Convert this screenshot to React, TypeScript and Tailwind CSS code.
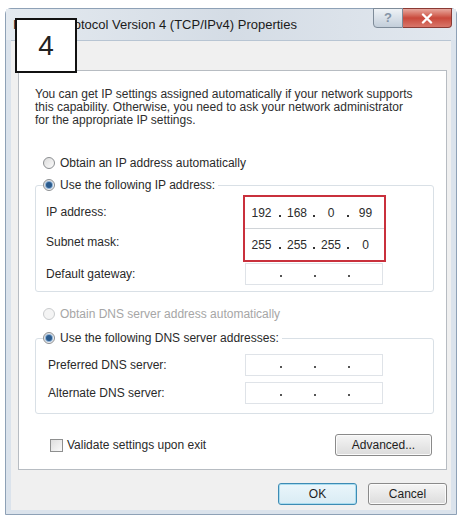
import React from 'react';

interface RadioProps {
  checked?: boolean;
  disabled?: boolean;
}

function Radio({ checked, disabled }: RadioProps) {
  if (disabled) {
    return (
      <span className="flex h-[12px] w-[12px] shrink-0 items-center justify-center rounded-full border border-[#c9cbcd] bg-[#f4f4f4]" />
    );
  }
  return (
    <span className="flex h-[12px] w-[12px] shrink-0 items-center justify-center rounded-full border border-[#8b8e91] bg-gradient-to-br from-[#dcdcdc] to-[#fbfbfb]">
      {checked && (
        <span className="h-[6px] w-[6px] rounded-full bg-[#2a5a8c] shadow-[0_0_0_1px_#8fb2d6]" />
      )}
    </span>
  );
}

interface IpFieldProps {
  octets?: string[];
  framed?: boolean;
}

// four octet cells with dots between, like the Win32 IP address control
function IpField({ octets = ['', '', '', ''], framed = true }: IpFieldProps) {
  const widths = ['w-[33px]', 'w-[30px]', 'w-[30px]', 'w-[31px]'];
  return (
    <div
      className={
        framed
          ? 'flex h-[22px] w-[138px] items-center border border-[#dfe3e8] bg-white'
          : 'flex h-[31px] w-full items-center bg-white'
      }
    >
      {octets.map((value, i) => (
        <React.Fragment key={i}>
          <span className={`${widths[i]} text-center text-[12px] text-[#2b2b2b]`}>{value}</span>
          {i < 3 && (
            <span className="flex w-[4px] justify-center">
              <span
                className={
                  framed
                    ? 'mt-[3px] h-[2px] w-[2px] bg-[#555]'
                    : 'mt-[7px] h-[2px] w-[2px] bg-[#333]'
                }
              />
            </span>
          )}
        </React.Fragment>
      ))}
    </div>
  );
}

interface ButtonProps {
  label: string;
  isDefault?: boolean;
  width: string;
}

function Button({ label, isDefault, width }: ButtonProps) {
  return (
    <div
      className={`${width} flex h-[22px] items-center justify-center rounded-[3px] border text-[12px] text-[#1e1e1e] ${
        isDefault
          ? 'border-[#3d8bb4] bg-gradient-to-b from-[#eaf6fb] to-[#d9ecf4] shadow-[inset_0_0_0_1px_#a9dcef]'
          : 'border-[#8a8a8a] bg-gradient-to-b from-[#f5f5f5] to-[#dcdcdc] shadow-[inset_0_0_0_1px_#fbfbfb]'
      }`}
    >
      {label}
    </div>
  );
}

export default function App() {
  return (
    <div
      className="relative h-[518px] w-[462px] overflow-hidden bg-white text-[#2a2a2a]"
      style={{ fontFamily: '"Liberation Sans", Arial, sans-serif' }}
    >
      <div className="ml-[5px] mt-[8px] flex w-[452px] flex-col rounded-t-[6px] border border-[#8ea1b6] bg-[#dbe3ec]">
        {/* title bar */}
        <div className="flex h-[31px] items-center bg-gradient-to-r from-[#e4eaf0] via-[#d4dce5] to-[#e2e8ef] pl-[7px]">
          <span className="flex-1 text-[13px] text-[#1b1b1b]">
            Internet Protocol Version 4 (TCP/IPv4) Properties
          </span>
          <div className="-mt-px mr-[4px] flex self-start">
            <div className="flex h-[20px] w-[30px] items-center justify-center rounded-bl-[4px] border border-[#7e8b99] bg-gradient-to-b from-[#eef2f6] to-[#c3ceda] text-[13px] font-bold text-[#8494a6]">
              ?
            </div>
            <div className="flex h-[20px] w-[49px] items-center justify-center rounded-br-[4px] border border-l-0 border-[#8a3a34] bg-gradient-to-b from-[#e6a79e] via-[#c9483b] to-[#d8766a]">
              <svg width="12" height="11" viewBox="0 0 12 11">
                <path d="M2 1.5 L10 9.5 M10 1.5 L2 9.5" stroke="#ffffff" strokeWidth="2.4" strokeLinecap="round" />
              </svg>
            </div>
          </div>
        </div>

        {/* client area */}
        <div className="mx-[5px] mb-[4px] flex flex-col border-t border-[#b8c5d3] bg-[#f0f0f0] pb-[5px] pl-[7px] pr-[4px] pt-[29px]">
          <div className="flex h-[400px] flex-col border border-[#b7bcc2] bg-white pl-[16px] pr-[12px] pt-[17px]">
            <p className="text-[12px] leading-[13px] text-[#2e2e2e]">
              You can get IP settings assigned automatically if your network supports
              <br />
              this capability. Otherwise, you need to ask your network administrator
              <br />
              for the appropriate IP settings.
            </p>

            <div className="ml-[8px] mt-[28px] flex h-[16px] items-center gap-[5px] text-[12px]">
              <Radio />
              <span>Obtain an IP address automatically</span>
            </div>

            {/* static IP group */}
            <div className="mt-[14px] flex flex-col rounded-[3px] border border-[#d9e0e6] pb-[6px]">
              <div className="-mt-[9px] ml-[7px] flex h-[16px] w-fit items-center gap-[5px] bg-white pr-[3px] text-[12px]">
                <Radio checked />
                <span>Use the following IP address:</span>
              </div>
              <div className="mt-[2px] flex">
                <div className="flex w-[207px] flex-col pl-[10px] pt-[2px] text-[12px]">
                  <span className="flex h-[30px] items-center">IP address:</span>
                  <span className="flex h-[30px] items-center">Subnet mask:</span>
                </div>
                <div className="flex w-[143px] flex-col border-2 border-[#c9303c]">
                  <div className="border-b border-[#d0d4d8]">
                    <IpField framed={false} octets={['192', '168', '0', '99']} />
                  </div>
                  <IpField framed={false} octets={['255', '255', '255', '0']} />
                </div>
              </div>
              <div className="mt-[1px] flex items-center">
                <span className="w-[209px] pl-[10px] text-[12px]">Default gateway:</span>
                <IpField />
              </div>
            </div>

            <div className="ml-[8px] mt-[14px] flex h-[16px] items-center gap-[5px] text-[12px] text-[#a6a6a6]">
              <Radio disabled />
              <span>Obtain DNS server address automatically</span>
            </div>

            {/* DNS group */}
            <div className="mt-[16px] flex flex-col gap-[6px] rounded-[3px] border border-[#d9e0e6] pb-[9px]">
              <div className="-mt-[9px] ml-[7px] mb-[2px] flex h-[16px] w-fit items-center gap-[5px] bg-white pr-[3px] text-[12px]">
                <Radio checked />
                <span>Use the following DNS server addresses:</span>
              </div>
              <div className="flex items-center">
                <span className="w-[209px] pl-[12px] text-[12px]">Preferred DNS server:</span>
                <IpField />
              </div>
              <div className="flex items-center">
                <span className="w-[209px] pl-[12px] text-[12px]">Alternate DNS server:</span>
                <IpField />
              </div>
            </div>

            <div className="mt-[20px] flex h-[22px] items-center pl-[15px] pr-[2px]">
              <span className="h-[13px] w-[13px] border border-[#8e8f8f] bg-gradient-to-br from-[#dedede] to-[#fafafa]" />
              <span className="ml-[4px] flex-1 text-[12px]">Validate settings upon exit</span>
              <Button label="Advanced..." width="w-[97px]" />
            </div>
          </div>

          <div className="mt-[13px] flex justify-end gap-[11px]">
            <Button label="OK" width="w-[79px]" isDefault />
            <Button label="Cancel" width="w-[79px]" />
          </div>
        </div>
      </div>

      {/* step marker laid over the dialog */}
      <div className="absolute left-[15px] top-[18px] flex h-[55px] w-[62px] items-center justify-center border-2 border-[#111] bg-white text-[28px] text-[#222]">
        4
      </div>
    </div>
  );
}
